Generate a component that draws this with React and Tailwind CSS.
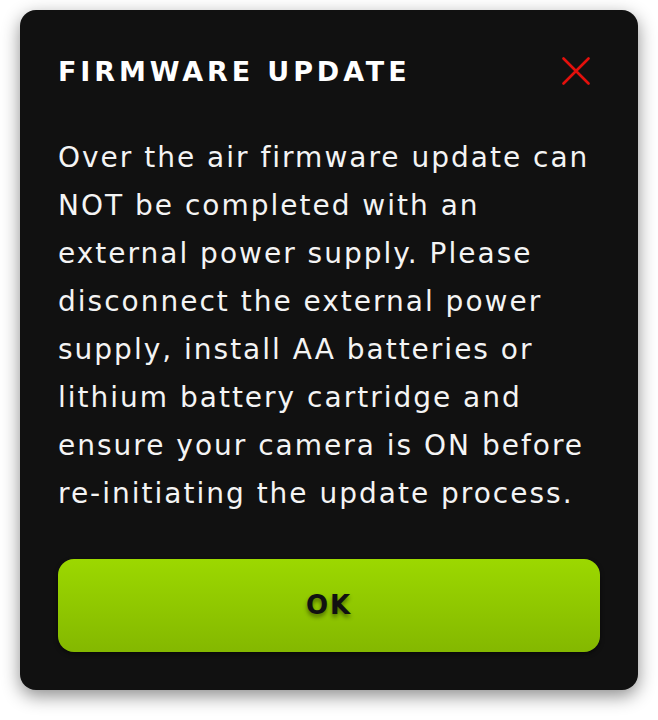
export default function App() {
  return (
    <div className="min-h-screen bg-white pt-[10px] px-[20px]">
      <div
        className="bg-[#111111] rounded-[16px] pt-[41px] px-[38px] pb-[38px] shadow-[0_6px_18px_rgba(0,0,0,0.45)]"
        style={{ fontFamily: '"DejaVu Sans", sans-serif' }}
      >
        <div className="flex items-center justify-between h-10">
          <h1 className="text-white font-bold text-[27px] tracking-[3.9px] leading-none">FIRMWARE UPDATE</h1>
          <button className="w-[40px] h-[40px] flex items-center justify-center mr-[4px]">
            <svg width="28" height="28" viewBox="0 0 28 28" fill="none" stroke="#e3100c" strokeWidth="2.6" strokeLinecap="round">
              <path d="M1.5 1.5 L26.5 26.5 M26.5 1.5 L1.5 26.5" />
            </svg>
          </button>
        </div>
        <p className="mt-[43px] text-[#f4f4f4] text-[28px] leading-[48px] tracking-[2px]">
          Over the air firmware update can NOT be completed with an external power supply. Please disconnect the external power supply, install AA batteries or lithium battery cartridge and ensure your camera is ON before re-initiating the update process.
        </p>
        <button className="mt-[41px] w-full h-[93px] rounded-[16px] bg-gradient-to-b from-[#9cd800] to-[#84b800] text-[#111111] font-bold text-[26px] tracking-[2px] [text-shadow:0_3px_4px_rgba(0,0,0,0.45)] shadow-[0_2px_4px_rgba(0,0,0,0.5)]">
          OK
        </button>
      </div>
    </div>
  )
}
